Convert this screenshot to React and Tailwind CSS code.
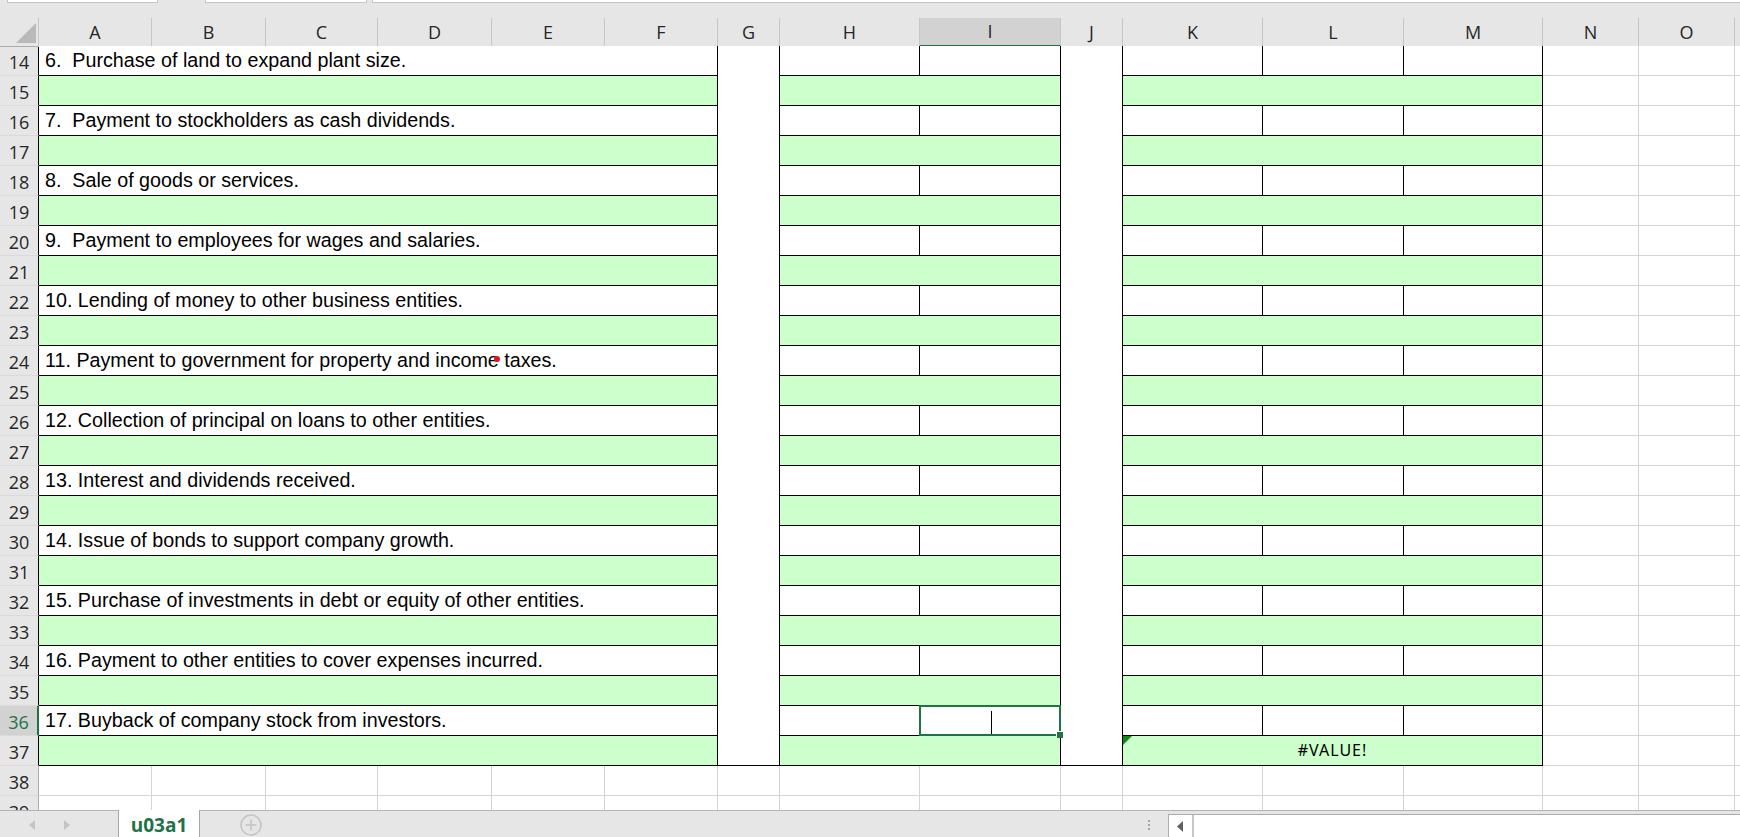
import React from "react";

const COLS =
  "grid grid-cols-[39px_113px_114px_112px_114px_113px_113px_62px_140px_141px_62px_140px_141px_139px_96px_96px_1fr]";

const letters = ["A", "B", "C", "D", "E", "F", "G", "H", "I", "J", "K", "L", "M", "N", "O"];

const items = [
  { n: 14, text: "6.  Purchase of land to expand plant size." },
  { n: 16, text: "7.  Payment to stockholders as cash dividends." },
  { n: 18, text: "8.  Sale of goods or services." },
  { n: 20, text: "9.  Payment to employees for wages and salaries." },
  { n: 22, text: "10. Lending of money to other business entities." },
  { n: 24, text: "11. Payment to government for property and income taxes.", mark: true },
  { n: 26, text: "12. Collection of principal on loans to other entities." },
  { n: 28, text: "13. Interest and dividends received." },
  { n: 30, text: "14. Issue of bonds to support company growth." },
  { n: 32, text: "15. Purchase of investments in debt or equity of other entities." },
  { n: 34, text: "16. Payment to other entities to cover expenses incurred." },
  { n: 36, text: "17. Buyback of company stock from investors.", selected: true },
];

function RowHead({ n, active, inTable }) {
  const look = active
    ? "bg-[#d2d2d2] text-[#217346] border-r-2 border-r-[#217346]"
    : inTable
    ? "bg-[#e6e6e6] text-[#262626] border-r border-r-black"
    : "bg-[#e6e6e6] text-[#262626] border-r border-r-[#ababab]";
  return (
    <div className={`flex items-center justify-center pt-[4px] border-b border-b-[#dadada] text-[18px] ${look}`}>
      {n}
    </div>
  );
}

// empty cells with the light gridlines (N, O and the sliver after O)
function Blank() {
  return (
    <>
      <div className="bg-white border-r border-b border-[#d4d4d4]" />
      <div className="bg-white border-r border-b border-[#d4d4d4]" />
      <div className="bg-white border-b border-[#d4d4d4]" />
    </>
  );
}

function TextRow({ n, text, selected, mark }) {
  return (
    <>
      <RowHead n={n} active={selected} inTable />
      <div className="col-span-6 relative bg-white border-r border-b border-black pl-[6px] leading-[29px] text-[19.7px] whitespace-pre text-black font-['Liberation_Sans',Arial,sans-serif]">
        {text}
        {mark && <span className="absolute left-[455px] top-[10px] w-[6px] h-[6px] rounded-full bg-[#e81123]" />}
      </div>
      <div className="bg-white border-r border-black" />
      <div className="bg-white border-r border-b border-black" />
      <div className="relative bg-white border-r border-b border-black">
        {selected && (
          <>
            <div className="absolute -left-px -top-px -right-px -bottom-px border-2 border-[#217346]" />
            <div className="absolute left-[71px] top-[5px] w-px h-[23px] bg-black" />
            <div className="absolute -right-[3px] -bottom-[3px] w-[7px] h-[7px] bg-[#217346] border-l border-t border-white" />
          </>
        )}
      </div>
      <div className="bg-white border-r border-black" />
      <div className="bg-white border-r border-b border-black" />
      <div className="bg-white border-r border-b border-black" />
      <div className="bg-white border-r border-b border-black" />
      <Blank />
    </>
  );
}

function GreenRow({ n, last }) {
  return (
    <>
      <RowHead n={n} inTable />
      <div className="col-span-6 bg-[#ccffcc] border-r border-b border-black" />
      <div className={last ? "bg-white border-r border-b border-black" : "bg-white border-r border-black"} />
      <div className="col-span-2 bg-[#ccffcc] border-r border-b border-black" />
      <div className={last ? "bg-white border-r border-b border-black" : "bg-white border-r border-black"} />
      <div className="col-span-3 relative bg-[#ccffcc] border-r border-b border-black flex justify-center leading-[29px] text-[16px] tracking-[1px] text-black font-['Noto_Sans',sans-serif]">
        {last && (
          <>
            <svg className="absolute left-0 top-0" width="9" height="9" viewBox="0 0 9 9">
              <polygon points="0,0 9,0 0,9" fill="#118a11" />
            </svg>
            #VALUE!
          </>
        )}
      </div>
      <Blank />
    </>
  );
}

function PlainRow({ n }) {
  return (
    <>
      <RowHead n={n} />
      {letters.map((l) => (
        <div key={l} className="bg-white border-r border-b border-[#d4d4d4]" />
      ))}
      <div className="bg-white border-b border-[#d4d4d4]" />
    </>
  );
}

export default function App() {
  return (
    <div className="w-[1740px] h-[837px] overflow-hidden flex flex-col bg-[#e6e6e6] font-['Open_Sans',sans-serif]">
      {/* bottom edge of the formula bar */}
      <div className="h-[18px] shrink-0 flex items-start">
        <div className="ml-[7px] w-[151px] h-[3px] bg-white border-x border-b border-[#c6c6c6]" />
        <div className="ml-[47px] w-[162px] h-[3px] bg-white border-x border-b border-[#c6c6c6]" />
        <div className="ml-[5px] flex-1 h-[3px] bg-white border-l border-b border-[#c6c6c6]" />
      </div>

      {/* sheet */}
      <div className="h-[792px] shrink-0 overflow-hidden bg-white">
        <div className={`${COLS} h-[28px] bg-[#e6e6e6]`}>
          <div className="relative border-r border-b border-r-[#c6c6c6] border-b-[#ababab]">
            <svg className="absolute left-0 top-0" width="39" height="28" viewBox="0 0 39 28">
              <polygon points="36,5 36,25 16,25" fill="#b9b9b9" />
            </svg>
          </div>
          {letters.map((l) =>
            l === "I" ? (
              <div
                key={l}
                className="flex items-center justify-center bg-[#d2d2d2] border-r border-r-[#c6c6c6] border-b-2 border-b-[#217346] text-[18px] text-[#262626]"
              >
                {l}
              </div>
            ) : (
              <div
                key={l}
                className="flex items-center justify-center border-r border-r-[#c6c6c6] border-b border-b-[#ababab] text-[18px] text-[#262626]"
              >
                {l}
              </div>
            )
          )}
          <div className="border-b border-b-[#ababab]" />
        </div>

        <div className={`${COLS} auto-rows-[30px]`}>
          {items.map((it) => (
            <React.Fragment key={it.n}>
              <TextRow {...it} />
              <GreenRow n={it.n + 1} last={it.n === 36} />
            </React.Fragment>
          ))}
          <PlainRow n={38} />
          <PlainRow n={39} />
        </div>
      </div>

      {/* sheet tabs + horizontal scroll */}
      <div className="h-[27px] shrink-0 flex border-t border-[#b4b4b4] bg-[#e6e6e6]">
        <div className="w-[118px] flex items-center pl-[28px] gap-[27px] pt-[2px]">
          <svg width="8" height="12" viewBox="0 0 8 12">
            <polygon points="7,1 7,11 1,6" fill="#c4c4c4" />
          </svg>
          <svg width="8" height="12" viewBox="0 0 8 12">
            <polygon points="1,1 1,11 7,6" fill="#c4c4c4" />
          </svg>
        </div>
        <div className="w-[82px] -mt-px bg-white border-x border-[#a6a6a6] flex items-center justify-center pt-[3px] text-[19px] font-bold text-[#217346]">
          u03a1
        </div>
        <div className="ml-[40px] flex items-center pt-[2px]">
          <svg width="22" height="22" viewBox="0 0 22 22" fill="none" stroke="#c4c4c4" strokeWidth="1.5">
            <circle cx="11" cy="11" r="10" />
            <path d="M11 5.5v11M5.5 11h11" />
          </svg>
        </div>
        <div className="ml-auto w-[595px] flex">
          <div className="w-[23px] flex flex-col items-start pl-[3px] pt-[9px] gap-[2px]">
            <span className="w-[2px] h-[2px] bg-[#a6a6a6]" />
            <span className="w-[2px] h-[2px] bg-[#a6a6a6]" />
            <span className="w-[2px] h-[2px] bg-[#a6a6a6]" />
          </div>
          <div className="flex-1 mt-[3px] bg-white border-l border-t border-[#ababab] flex">
            <div className="w-[25px] border-r-2 border-[#c6c6c6] flex items-center justify-center">
              <svg width="7" height="11" viewBox="0 0 7 11">
                <polygon points="6,0 6,11 0,5.5" fill="#606060" />
              </svg>
            </div>
          </div>
        </div>
      </div>
    </div>
  );
}
